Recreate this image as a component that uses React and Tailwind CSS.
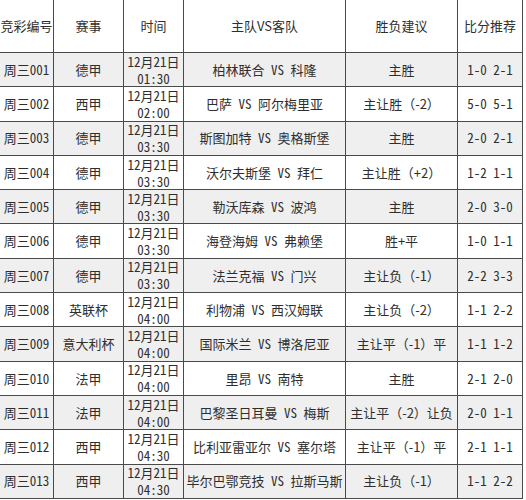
const rows = [
  ['周三001', '德甲', '01:30', '柏林联合 VS 科隆', '主胜', '1-0 2-1'],
  ['周三002', '西甲', '02:00', '巴萨 VS 阿尔梅里亚', '主让胜（-2）', '5-0 5-1'],
  ['周三003', '德甲', '03:30', '斯图加特 VS 奥格斯堡', '主胜', '2-0 2-1'],
  ['周三004', '德甲', '03:30', '沃尔夫斯堡 VS 拜仁', '主让胜（+2）', '1-2 1-1'],
  ['周三005', '德甲', '03:30', '勒沃库森 VS 波鸿', '主胜', '2-0 3-0'],
  ['周三006', '德甲', '03:30', '海登海姆 VS 弗赖堡', '胜+平', '1-0 1-1'],
  ['周三007', '德甲', '03:30', '法兰克福 VS 门兴', '主让负（-1）', '2-2 3-3'],
  ['周三008', '英联杯', '04:00', '利物浦 VS 西汉姆联', '主让负（-2）', '1-1 2-2'],
  ['周三009', '意大利杯', '04:00', '国际米兰 VS 博洛尼亚', '主让平（-1）平', '1-1 1-2'],
  ['周三010', '法甲', '04:00', '里昂 VS 南特', '主胜', '2-1 2-0'],
  ['周三011', '法甲', '04:00', '巴黎圣日耳曼 VS 梅斯', '主让平（-2）让负', '2-0 1-1'],
  ['周三012', '西甲', '04:30', '比利亚雷亚尔 VS 塞尔塔', '主让平（-1）平', '2-1 1-1'],
  ['周三013', '西甲', '04:30', '毕尔巴鄂竞技 VS 拉斯马斯', '主让负（-1）', '1-1 2-2'],
];

const heads = ['竞彩编号', '赛事', '时间', '主队VS客队', '胜负建议', '比分推荐'];

const cell = 'flex items-center justify-center border-r border-b border-[#4a4a4a] text-center whitespace-nowrap';
// half-width latin glyphs, like the Song font in the original sheet
const hw = " [font-feature-settings:'hwid']";

export default function App() {
  return (
    <div
      className="w-[526px] h-[500px] bg-white text-[#2e2e2e] text-[13px]"
      style={{ fontFamily: '"Noto Sans CJK SC", "DejaVu Sans", sans-serif' }}
    >
      <div className="grid w-[523px] grid-cols-[54px_70px_60px_162px_112px_65px] grid-rows-[53px_repeat(13,34.3px)]">
        {heads.map((h) => (
          <div key={h} className={cell + ' bg-white'}>
            {h}
          </div>
        ))}
        {rows.map((r, i) => {
          const bg = i % 2 === 0 ? ' bg-[#efefef]' : ' bg-white';
          return [
            <div key={i + 'a'} className={cell + bg + hw}>{r[0]}</div>,
            <div key={i + 'b'} className={cell + bg}>{r[1]}</div>,
            <div key={i + 'c'} className={cell + bg + hw + ' flex-col leading-[17px]'}>
              <span>12月21日</span>
              <span>{r[2]}</span>
            </div>,
            <div key={i + 'd'} className={cell + bg + hw}>{r[3]}</div>,
            <div key={i + 'e'} className={cell + bg}>{r[4]}</div>,
            <div key={i + 'f'} className={cell + bg + hw}>{r[5]}</div>,
          ];
        })}
      </div>
    </div>
  );
}
